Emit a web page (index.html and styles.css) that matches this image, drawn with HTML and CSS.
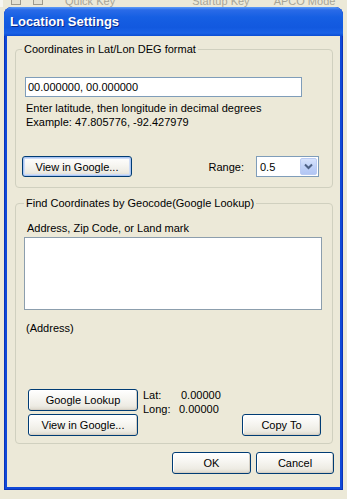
FILE: index.html
```html
<!DOCTYPE html>
<html>
<head>
<meta charset="utf-8">
<title>Location Settings</title>
<link rel="stylesheet" href="styles.css">
</head>
<body>
<div class="backdrop">
  <span class="ticon"></span>
  <span class="ticon"></span>
  <span class="bg-col c1">Quick Key</span>
  <span class="bg-col c2">Startup Key</span>
  <span class="bg-col c3">APCO Mode</span>
</div>
<div class="window">
  <div class="titlebar">Location Settings</div>
  <div class="client">
    <fieldset class="group g1">
      <legend>Coordinates in Lat/Lon DEG format</legend>
      <input class="coord" type="text" value="00.000000, 00.000000">
      <p class="hint">Enter latitude, then longitude in decimal degrees<br>Example: 47.805776, -92.427979</p>
      <div class="row1">
        <button class="btn view1 focused">View in Google...</button>
        <span class="range">Range:</span>
        <div class="select">
          <span class="sel-val">0.5</span>
          <span class="drop"><svg width="9" height="7" viewBox="0 0 9 7"><path d="M1 1.5 L4.5 5 L8 1.5" fill="none" stroke="#4D6185" stroke-width="2"/></svg></span>
        </div>
      </div>
    </fieldset>
    <fieldset class="group g2">
      <legend>Find Coordinates by Geocode(Google Lookup)</legend>
      <div class="addr-label">Address, Zip Code, or Land mark</div>
      <textarea class="addr"></textarea>
      <div class="addr-out">(Address)</div>
      <div class="lookup">
        <div class="lk-buttons">
          <button class="btn wide">Google Lookup</button>
          <button class="btn wide">View in Google...</button>
        </div>
        <div class="latlong">
          <div><span class="ll-lab lat">Lat:</span>0.00000</div>
          <div><span class="ll-lab long">Long:</span>0.00000</div>
        </div>
        <button class="btn copy">Copy To</button>
      </div>
    </fieldset>
    <div class="dlg-buttons">
      <button class="btn ok">OK</button>
      <button class="btn cancel">Cancel</button>
    </div>
  </div>
</div>
</body>
</html>
```
FILE: styles.css
```css
* { box-sizing: border-box; }
html, body { margin: 0; padding: 0; }
body {
  width: 347px;
  height: 499px;
  overflow: hidden;
  background: #ECE9D8;
  font-family: "Liberation Sans", Arial, sans-serif;
  font-size: 11px;
  color: #000;
}
.backdrop {
  height: 7px;
  overflow: hidden;
  display: flex;
  align-items: flex-start;
  background: #ECE9D8;
  border-left: 3px solid #F7F6F1;
}
.ticon {
  width: 10px;
  height: 5px;
  margin-left: 8px;
  border: 1px solid #9D9A8D;
  border-top: none;
  background: #E4E1D3;
}
.ticon + .ticon { margin-left: 12px; }
.bg-col {
  font-size: 11px;
  line-height: 13px;
  margin-top: -5px;
  white-space: nowrap;
  color: #A8A597;
}
.c1 { margin-left: 22px; }
.c2 { margin-left: 77px; }
.c3 { margin-left: 24px; }

.window {
  margin-left: 4px;
  width: 339px;
  background: #1049D8;
  border-radius: 8px 8px 0 0;
  padding: 0 3px 3px;
  display: flex;
  flex-direction: column;
  box-shadow: inset 1px 0 0 #0A33B8, inset -1px 0 0 #0A33B8, inset 0 -1px 0 #0A33B8;
}
.titlebar {
  margin: 0 -3px;
  height: 29px;
  padding-left: 6px;
  display: flex;
  align-items: center;
  border-radius: 8px 8px 0 0;
  background: linear-gradient(180deg, #5D9CF8 0%, #2A6BE8 10%, #165FE3 35%, #1259DF 70%, #1A62E6 90%, #0B4DD3 100%);
  color: #fff;
  font-weight: bold;
  font-size: 13px;
  text-shadow: 1px 1px 0 #0A2A8C;
}
.client {
  background: #ECE9D8;
  padding: 6px 7px 13px 8px;
  display: flex;
  flex-direction: column;
}
.group {
  margin: 0;
  min-width: 0;
  border: 1px solid #D0D0BF;
  border-radius: 4px;
}
.group legend {
  padding: 0 2px;
  line-height: 14px;
  color: #000;
}
.g1 { padding: 21px 13px 10px 9px; }
.g1 legend { margin-left: -3px; }
.coord {
  display: block;
  width: 277px;
  height: 20px;
  margin: 0;
  border: 1px solid #7F9DB9;
  padding: 0 2px;
  font: inherit;
  color: #000;
  background: #fff;
}
.hint {
  margin: 4px 0 0;
  line-height: 14px;
  padding-left: 1px;
}
.row1 {
  margin-top: 27px;
  display: flex;
  align-items: center;
}
.btn {
  font: inherit;
  color: #000;
  padding: 0;
  border: 1px solid #003C74;
  border-radius: 3px;
  background: linear-gradient(180deg, #FFFFFF 0%, #F7F6F2 40%, #EDEBE3 80%, #DCD8CC 100%);
  box-shadow: inset -1px -1px 0 #D6D0C5, inset 1px 1px 0 #FFFFFF;
}
.btn.focused {
  box-shadow: inset 0 0 0 1px #A9C4F2, inset 0 0 0 2px #CEDCF6;
}
.view1 {
  width: 110px;
  height: 21px;
  margin-left: -3px;
}
.range {
  margin-left: auto;
  margin-right: 12px;
}
.select {
  width: 63px;
  height: 21px;
  border: 1px solid #7F9DB9;
  background: #fff;
  display: flex;
  align-items: center;
  padding: 1px;
}
.sel-val {
  flex: 1;
  padding-left: 2px;
}
.drop {
  width: 17px;
  height: 17px;
  border: 1px solid #BACBF3;
  border-radius: 2px;
  background: linear-gradient(180deg, #D7E3FC 0%, #C0D2F8 50%, #B2C6F4 100%);
  display: flex;
  align-items: center;
  justify-content: center;
}
.g2 {
  margin-top: 8px;
  padding: 11px 11px 7px 8px;
}
.g2 legend { margin-left: 0; }
.addr-label {
  line-height: 14px;
  padding-left: 3px;
}
.addr {
  display: block;
  width: 298px;
  height: 73px;
  margin: 2px 0 0;
  border: 1px solid #8C9EAD;
  background: #fff;
  resize: none;
  font: inherit;
}
.addr-out {
  margin-top: 11px;
  line-height: 14px;
  padding-left: 2px;
}
.lookup {
  margin-top: 54px;
  display: flex;
  align-items: flex-start;
}
.lk-buttons {
  margin-left: 4px;
  display: flex;
  flex-direction: column;
  gap: 3px;
}
.wide {
  width: 110px;
  height: 22px;
}
.latlong {
  margin-left: 5px;
  margin-top: -1px;
  line-height: 14px;
}
.ll-lab { display: inline-block; }
.lat { width: 38px; }
.long { width: 36px; }
.copy {
  margin-left: auto;
  align-self: flex-end;
  width: 79px;
  height: 22px;
}
.dlg-buttons {
  margin-top: 8px;
  margin-right: -1px;
  display: flex;
  justify-content: flex-end;
  gap: 5px;
}
.ok { width: 79px; height: 22px; }
.cancel { width: 78px; height: 22px; }
```
